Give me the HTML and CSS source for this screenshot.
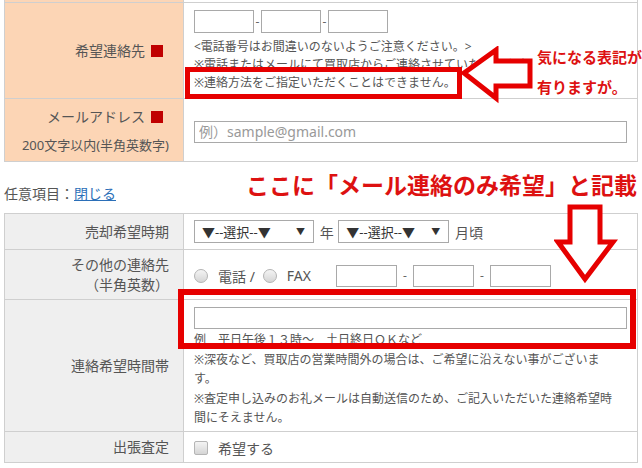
FILE: index.html
```html
<!DOCTYPE html>
<html lang="ja">
<head>
  <meta charset="UTF-8" />
  <meta name="viewport" content="width=device-width, initial-scale=1.0"/>
  <title>査定フォーム</title>
  <link rel="stylesheet" href="styles.css">
</head>
<body>
<div class="page">

  <table class="form required">
    <tr class="cut"><th></th><td></td></tr>
    <tr class="contact">
      <th>希望連絡先<span class="must"></span></th>
      <td>
        <div class="tel">
          <input type="text" class="tel-box"><span class="dash">-</span><input type="text" class="tel-box"><span class="dash">-</span><input type="text" class="tel-box">
        </div>
        <div class="note">
          &lt;電話番号はお間違いのないようご注意ください。&gt;<br>
          ※電話またはメールにて買取店からご連絡させていただきます。<br>
          ※連絡方法をご指定いただくことはできません。
        </div>
      </td>
    </tr>
    <tr class="mail">
      <th>
        <span class="label-main">メールアドレス<span class="must"></span></span>
        <span class="label-sub">200文字以内(半角英数字)</span>
      </th>
      <td><input type="text" class="wide" placeholder="例）sample@gmail.com"></td>
    </tr>
  </table>

  <p class="optional">任意項目：<a href="#">閉じる</a></p>

  <table class="form optional-table">
    <tr class="period">
      <th>売却希望時期</th>
      <td>
        <span class="select s-year">▼--選択--▼<span class="caret">▼</span></span>
        <span class="unit">年</span>
        <span class="select s-month">▼--選択--▼<span class="caret">▼</span></span>
        <span class="unit">月頃</span>
      </td>
    </tr>
    <tr class="other">
      <th>
        <span class="label-line">その他の連絡先</span>
        <span class="label-line">（半角英数）</span>
      </th>
      <td>
        <div class="other-row">
          <span class="radio"></span><span class="opt">電話 /</span>
          <span class="radio"></span><span class="opt">FAX</span>
          <span class="fax">
            <input type="text" class="tel-box"><span class="dash">-</span><input type="text" class="tel-box"><span class="dash">-</span><input type="text" class="tel-box">
          </span>
        </div>
      </td>
    </tr>
    <tr class="time">
      <th>連絡希望時間帯</th>
      <td>
        <input type="text" class="wide">
        <div class="note note-time">
          例　平日午後１３時〜　土日終日ＯＫなど<br>
          ※深夜など、買取店の営業時間外の場合は、ご希望に沿えない事がございます。<br>
          ※査定申し込みのお礼メールは自動送信のため、ご記入いただいた連絡希望時間にそえません。
        </div>
      </td>
    </tr>
    <tr class="visit">
      <th>出張査定</th>
      <td><span class="check"></span><span class="opt">希望する</span></td>
    </tr>
  </table>

  <!-- annotations drawn over the form -->
  <div class="mark mark-1"></div>
  <div class="mark mark-2"></div>

  <svg class="arrow arrow-left" width="80" height="62" viewBox="0 0 80 62">
    <polygon points="4,27 36,4 36,15 70,15 70,40 36,40 36,52" fill="#fff" stroke="#e60000" stroke-width="5" stroke-linejoin="miter"/>
  </svg>
  <svg class="arrow arrow-down" width="66" height="82" viewBox="0 0 66 82">
    <polygon points="16,3 46,3 46,38 59,38 31,75 4,38 16,38" fill="#fff" stroke="#e60000" stroke-width="5" stroke-linejoin="miter"/>
  </svg>

  <div class="memo memo-1">気になる表記が<br>有りますが。</div>
  <div class="memo memo-2">ここに「メール連絡のみ希望」と記載</div>

</div>
</body>
</html>
```

FILE: styles.css
```css
body {
  margin: 0;
  font-family: "Noto Sans", "Noto Sans CJK JP", sans-serif;
  color: #555;
  background: #fff;
}

.page {
  position: relative;
  width: 642px;
  height: 468px;
  overflow: hidden;
  padding: 0 4px;
  box-sizing: border-box;
}

.form {
  width: 634px;
  border-collapse: collapse;
  table-layout: fixed;
}

.form th,
.form td {
  border: 1px solid #cfcfcf;
  padding: 0;
}

.form th {
  width: 164px;
  padding-right: 14px;
  text-align: right;
  font-weight: normal;
  font-size: 14px;
  line-height: 20px;
  vertical-align: middle;
}

.form td {
  padding-left: 10px;
  padding-right: 16px;
  font-size: 14px;
  vertical-align: middle;
}

.required th {
  background: #fcd5b5;
}

.optional-table th {
  background: #efefef;
}

.form .cut th,
.form .cut td {
  height: 2px;
  border-top: none;
}

/* required part */

.contact td {
  height: 88px;
  vertical-align: top;
  padding-top: 7px;
}

.contact th {
  padding-right: 20px;
}

.tel {
  display: flex;
  align-items: center;
  height: 23px;
}

.tel-box {
  width: 60px;
  height: 23px;
  box-sizing: border-box;
  border: 1px solid #a9a9a9;
  margin: 0;
  padding: 0;
}

.dash {
  width: 7px;
  text-align: center;
  font-size: 12px;
  color: #666;
}

.note {
  font-size: 12px;
  line-height: 18px;
  margin-top: 5px;
}

.must {
  display: inline-block;
  width: 12px;
  height: 12px;
  background: #c00000;
  margin-left: 6px;
  vertical-align: -1px;
}

.mail th {
  padding-right: 20px;
  padding-top: 2px;
}

.mail td {
  height: 59px;
  padding-top: 3px;
}

.label-main,
.label-line {
  display: block;
}

.label-sub {
  display: block;
  font-size: 13px;
  margin-top: 8px;
  margin-right: -6px;
}

.wide {
  width: 433px;
  height: 22px;
  box-sizing: border-box;
  border: 1px solid #a9a9a9;
  margin: 0;
  padding: 0 4px;
  font-family: inherit;
  font-size: 14px;
  display: block;
}

.wide::placeholder {
  color: #999;
}

.optional {
  margin: 22px 0 9px;
  font-size: 14px;
  line-height: 20px;
}

.optional a {
  color: #2b6fb8;
}

/* optional part */

.period td {
  height: 35px;
}

.select {
  display: inline-flex;
  align-items: center;
  width: 120px;
  height: 23px;
  box-sizing: border-box;
  border: 1px solid #a9a9a9;
  padding-left: 7px;
  font-size: 13px;
  color: #333;
  vertical-align: middle;
  position: relative;
}

.s-month {
  width: 111px;
}

.caret {
  position: absolute;
  right: 8px;
  font-size: 9px;
}

.unit {
  display: inline-block;
  margin: 0 1px 0 2px;
  vertical-align: middle;
}

.other td {
  height: 49px;
}

.other-row {
  display: flex;
  align-items: center;
  padding-top: 2px;
}

.radio,
.check {
  display: inline-block;
  width: 12px;
  height: 12px;
  border: 1px solid #b5b5b5;
  border-radius: 50%;
  background: linear-gradient(#f4f4f4, #d5d5d5);
}

.check {
  border-radius: 2px;
  vertical-align: middle;
}

.opt {
  margin: 0 8px 0 10px;
  vertical-align: middle;
}

.fax {
  display: flex;
  align-items: center;
  margin-left: 17px;
}

.fax .tel-box {
  width: 61px;
  height: 22px;
}

.fax .dash {
  width: 16px;
}

.time td {
  height: 124px;
  vertical-align: top;
  padding-top: 7px;
}

.note-time {
  margin-top: 1px;
  line-height: 19.5px;
}

.visit td {
  height: 30px;
}

/* overlay marks */

.mark {
  position: absolute;
  border: 5px solid #e60000;
  box-sizing: border-box;
}

.mark-1 {
  left: 185px;
  top: 67px;
  width: 277px;
  height: 32px;
}

.mark-2 {
  left: 178px;
  top: 289px;
  width: 458px;
  height: 60px;
  border-width: 6px;
}

.arrow {
  position: absolute;
}

.arrow-left {
  left: 460px;
  top: 46px;
}

.arrow-down {
  left: 554px;
  top: 204px;
}

.memo {
  position: absolute;
  color: #dd1111;
  font-weight: 700;
  font-family: "Noto Sans CJK JP", sans-serif;
}

.memo-1 {
  left: 537px;
  top: 42px;
  font-size: 15px;
  line-height: 30px;
  white-space: nowrap;
}

.memo-2 {
  left: 246px;
  top: 168px;
  font-size: 23px;
  line-height: 32px;
  white-space: nowrap;
}
```
